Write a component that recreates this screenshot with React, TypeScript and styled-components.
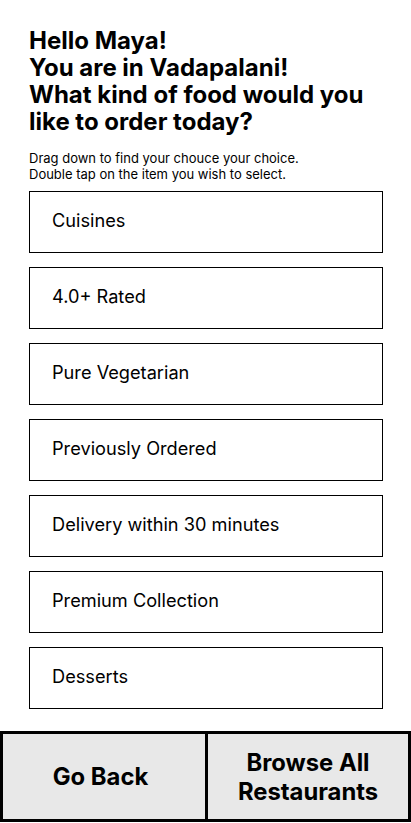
import React from "react";
import styled, { createGlobalStyle } from "styled-components";

const Global = createGlobalStyle`
  html, body { margin: 0; padding: 0; background: #ffffff; }
  body { font-family: Inter, "Noto Sans", sans-serif; color: #000; }
  * { box-sizing: border-box; }
`;

const Page = styled.div`
  width: 411px;
  min-height: 823px;
  display: flex;
  flex-direction: column;
`;

const Content = styled.main`
  padding: 27px 28px 0 29px;
  display: flex;
  flex-direction: column;
`;

const Heading = styled.h1`
  margin: 0;
  font-size: 24px;
  line-height: 27px;
  font-weight: 700;
`;

const Hint = styled.p`
  margin: 15px 0 0;
  font-size: 13px;
  line-height: 16px;
  font-weight: 400;
`;

const List = styled.ul`
  list-style: none;
  margin: 9px 0 0;
  padding: 0;
  display: flex;
  flex-direction: column;
  gap: 14px;
`;

const Option = styled.li`
  height: 62px;
  width: 354px;
  border: 1.3px solid #000;
  display: flex;
  align-items: center;
  padding: 0 0 4px 22px;
  font-size: 18.2px;
  font-weight: 400;
`;

const Footer = styled.div`
  margin-top: 22px;
  height: 91px;
  border: 3px solid #000;
  display: grid;
  grid-template-columns: 202px 1fr;
  background: #e8e8e8;
`;

const FooterButton = styled.button<{ $divider?: boolean }>`
  border: none;
  border-left: ${(p) => (p.$divider ? "3.5px solid #000" : "none")};
  background: #e8e8e8;
  font-family: Inter, "Noto Sans", sans-serif;
  font-size: 23.8px;
  font-weight: 700;
  line-height: 29px;
  color: #000;
  padding: 0 ${(p) => (p.$divider ? "0" : "7px")} 0 0;
  display: flex;
  align-items: center;
  justify-content: center;
  text-align: center;
`;

const options = [
  "Cuisines",
  "4.0+ Rated",
  "Pure Vegetarian",
  "Previously Ordered",
  "Delivery within 30 minutes",
  "Premium Collection",
  "Desserts",
];

export default function App() {
  return (
    <Page>
      <Global />
      <Content>
        <Heading>
          Hello Maya!
          <br />
          You are in Vadapalani!
          <br />
          What kind of food would you like to order today?
        </Heading>
        <Hint>
          Drag down to find your chouce your choice.
          <br />
          Double tap on the item you wish to select.
        </Hint>
        <List>
          {options.map((o) => (
            <Option key={o}>{o}</Option>
          ))}
        </List>
      </Content>
      <Footer>
        <FooterButton>Go Back</FooterButton>
        <FooterButton $divider>
          Browse All
          <br />
          Restaurants
        </FooterButton>
      </Footer>
    </Page>
  );
}
